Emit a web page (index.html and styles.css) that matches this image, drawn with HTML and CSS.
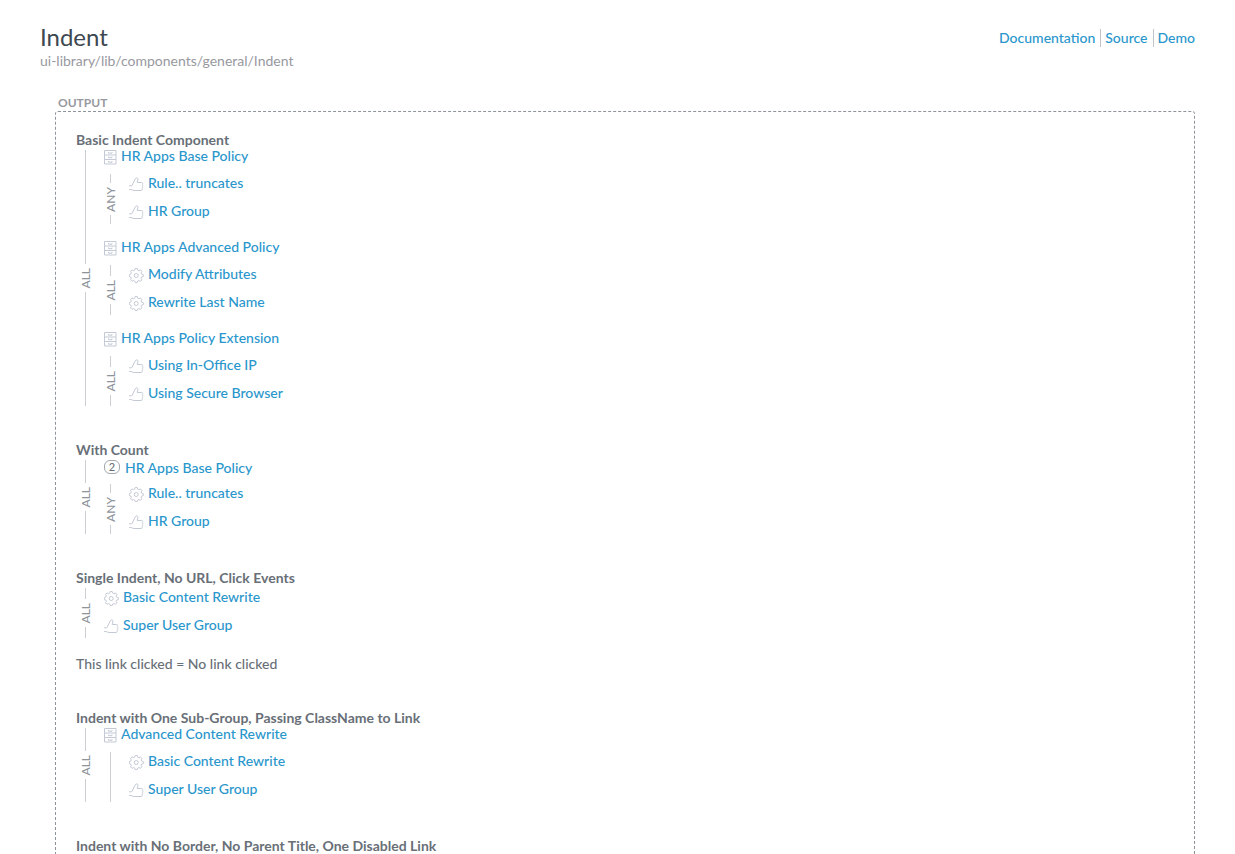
FILE: index.html
```html
<!DOCTYPE html>
<html lang="en">
<head>
<meta charset="utf-8">
<title>Indent</title>
<meta name="viewport" content="width=device-width, initial-scale=1">
<link rel="stylesheet" href="styles.css">
</head>
<body>
<svg class="sprite" aria-hidden="true">
  <symbol id="cabinet" viewBox="0 0 13 15">
    <path d="M.5.5h11.500v13.500H.5zM.5 5h11.500M.5 9.500h11.500M4.500 2v1.200h3.500V2M4.500 6.500v1.200h3.500V6.500M4.500 11v1.200h3.500V11"/>
  </symbol>
  <symbol id="thumb" viewBox="0 0 15 15">
    <path d="M0 8.800h2.200c.5 0 .8-.3 1-.7L6.300 1.800C7 .3 9.200.7 9 2.300L8.200 5.500h4.300c1.300 0 1.400 1.300.8 1.900.7.500.7 1.500.1 2 .5.600.4 1.500-.2 2 .3 1.100-.1 2.100-1.200 2.100H5c-1.500 0-2-1-3.200-1H0"/>
  </symbol>
  <symbol id="gear" viewBox="0 0 15 15">
    <path d="M6.200.5h2l.5 1.700 1.200.5 1.500-.8 1.500 1.500-.8 1.500.5 1.200 1.700.5v2l-1.700.5-.5 1.200.8 1.500-1.500 1.500-1.500-.8-1.200.5-.5 1.500h-2l-.5-1.500-1.200-.5-1.500.8-1.500-1.500.8-1.500-.5-1.200L.3 8.600v-2l1.500-.5.500-1.200-.8-1.500L3 1.900l1.500.8 1.200-.5z"/>
    <circle cx="7.200" cy="7.500" r="2"/>
  </symbol>
</svg>
<div class="page">
  <header class="header">
    <div>
      <h1 class="title">Indent</h1>
      <p class="path">ui-library/lib/components/general/Indent</p>
    </div>
    <nav class="nav">
      <a href="#">Documentation</a>
      <a href="#">Source</a>
      <a href="#">Demo</a>
    </nav>
  </header>

  <main class="output">
    <p class="output-label">OUTPUT</p>
    <div class="output-box">
      <section class="example">
        <h2 class="example-title">Basic Indent Component</h2>
        <div class="indent root">
          <div class="gutter"><span class="condition">ALL</span></div>
          <div class="policies">
            <div class="policy">
              <a class="item parent" href="#"><svg class="icon cabinet"><use href="#cabinet"/></svg>HR Apps Base Policy</a>
              <div class="indent">
                <div class="gutter"><span class="condition">ANY</span></div>
                <div class="rules">
                  <a class="item" href="#"><svg class="icon"><use href="#thumb"/></svg>Rule.. truncates</a>
                  <a class="item" href="#"><svg class="icon"><use href="#thumb"/></svg>HR Group</a>
                </div>
              </div>
            </div>
            <div class="policy">
              <a class="item parent" href="#"><svg class="icon cabinet"><use href="#cabinet"/></svg>HR Apps Advanced Policy</a>
              <div class="indent">
                <div class="gutter"><span class="condition">ALL</span></div>
                <div class="rules">
                  <a class="item" href="#"><svg class="icon"><use href="#gear"/></svg>Modify Attributes</a>
                  <a class="item" href="#"><svg class="icon"><use href="#gear"/></svg>Rewrite Last Name</a>
                </div>
              </div>
            </div>
            <div class="policy">
              <a class="item parent" href="#"><svg class="icon cabinet"><use href="#cabinet"/></svg>HR Apps Policy Extension</a>
              <div class="indent">
                <div class="gutter"><span class="condition">ALL</span></div>
                <div class="rules">
                  <a class="item" href="#"><svg class="icon"><use href="#thumb"/></svg>Using In-Office IP</a>
                  <a class="item" href="#"><svg class="icon"><use href="#thumb"/></svg>Using Secure Browser</a>
                </div>
              </div>
            </div>
          </div>
        </div>
      </section>

      <section class="example">
        <h2 class="example-title">With Count</h2>
        <div class="indent root">
          <div class="gutter"><span class="condition">ALL</span></div>
          <div class="policies">
            <div class="policy">
              <a class="item parent counted" href="#"><span class="count">2</span>HR Apps Base Policy</a>
              <div class="indent">
                <div class="gutter"><span class="condition">ANY</span></div>
                <div class="rules">
                  <a class="item" href="#"><svg class="icon"><use href="#gear"/></svg>Rule.. truncates</a>
                  <a class="item" href="#"><svg class="icon"><use href="#thumb"/></svg>HR Group</a>
                </div>
              </div>
            </div>
          </div>
        </div>
      </section>

      <section class="example">
        <h2 class="example-title">Single Indent, No URL, Click Events</h2>
        <div class="indent root">
          <div class="gutter"><span class="condition">ALL</span></div>
          <div class="rules">
            <a class="item" href="#"><svg class="icon"><use href="#gear"/></svg>Basic Content Rewrite</a>
            <a class="item" href="#"><svg class="icon"><use href="#thumb"/></svg>Super User Group</a>
          </div>
        </div>
        <p class="clicked">This link clicked = No link clicked</p>
      </section>

      <section class="example">
        <h2 class="example-title">Indent with One Sub-Group, Passing ClassName to Link</h2>
        <div class="indent root">
          <div class="gutter"><span class="condition">ALL</span></div>
          <div class="policies">
            <div class="policy">
              <a class="item parent" href="#"><svg class="icon cabinet"><use href="#cabinet"/></svg>Advanced Content Rewrite</a>
              <div class="indent">
                <div class="gutter"></div>
                <div class="rules">
                  <a class="item" href="#"><svg class="icon"><use href="#gear"/></svg>Basic Content Rewrite</a>
                  <a class="item" href="#"><svg class="icon"><use href="#thumb"/></svg>Super User Group</a>
                </div>
              </div>
            </div>
          </div>
        </div>
      </section>

      <section class="example">
        <h2 class="example-title">Indent with No Border, No Parent Title, One Disabled Link</h2>
      </section>
    </div>
  </main>
</div>
</body>
</html>
```
FILE: styles.css
```css
* {
  box-sizing: border-box;
}

body {
  margin: 0;
  background: #fff;
  color: #686f77;
  font: 14px/18px Lato, "Open Sans", sans-serif;
  font-weight: 500;
}

h1, h2, p {
  margin: 0;
}

a {
  color: #2996cc;
  text-decoration: none;
}

.sprite {
  display: none;
}

.page {
  padding: 23px 40px 40px;
}

.header {
  display: flex;
  justify-content: space-between;
  align-items: flex-start;
}

.title {
  color: #3e4851;
  font-size: 24px;
  font-weight: 400;
  line-height: 28px;
}

.path {
  color: #98999f;
  font-weight: 400;
  line-height: 20px;
}

.nav {
  display: flex;
  padding-top: 6px;
}

.nav a + a {
  margin-left: 5px;
  padding-left: 4px;
  border-left: 1px solid #c0c3c7;
}

.output {
  margin: 24px 0 0 15px;
}

.output-label {
  padding-left: 3px;
  color: #98999f;
  font-size: 12px;
  font-weight: 700;
  line-height: 16px;
}

.output-box {
  padding: 20px;
  border: 1px dashed #8f949b;
  border-radius: 3px;
}

.example + .example {
  margin-top: 36px;
}

.example-title {
  padding-bottom: 2px;
  font-size: 14px;
  font-weight: 700;
  line-height: 16px;
}

.indent {
  display: flex;
  gap: 12px;
}

.root {
  padding-left: 3px;
}

.gutter {
  display: flex;
  flex-direction: column;
  align-items: center;
  width: 13px;
}

.gutter::before,
.gutter::after {
  content: "";
  flex: 1;
  width: 1px;
  background: #cbced2;
}

.condition {
  padding: 4px 0;
  color: #8e949b;
  font-size: 12px;
  line-height: 13px;
  writing-mode: vertical-rl;
  transform: rotate(180deg);
}

.policies {
  display: grid;
  gap: 17px;
}

.rules {
  display: flex;
  flex-direction: column;
  align-items: flex-start;
  gap: 10px;
  padding-bottom: 4px;
}

.item {
  display: flex;
  align-items: center;
  gap: 4px;
  line-height: 18px;
}

.parent {
  height: 12px;
  margin-bottom: 12px;
}

.icon {
  width: 15px;
  height: 15px;
  margin-top: 2px;
  fill: none;
  stroke: #c3cad5;
  stroke-width: 1;
}

.cabinet {
  width: 13px;
}

.counted {
  height: 16px;
  margin-bottom: 8px;
  gap: 5px;
}

.count {
  width: 16px;
  margin-bottom: 2px;
  border: 1px solid #a3a8ae;
  border-radius: 6px;
  color: #686f77;
  font-size: 11px;
  line-height: 12px;
  text-align: center;
}

.clicked {
  padding-bottom: 2px;
  margin-top: 18px;
  line-height: 16px;
}
```
